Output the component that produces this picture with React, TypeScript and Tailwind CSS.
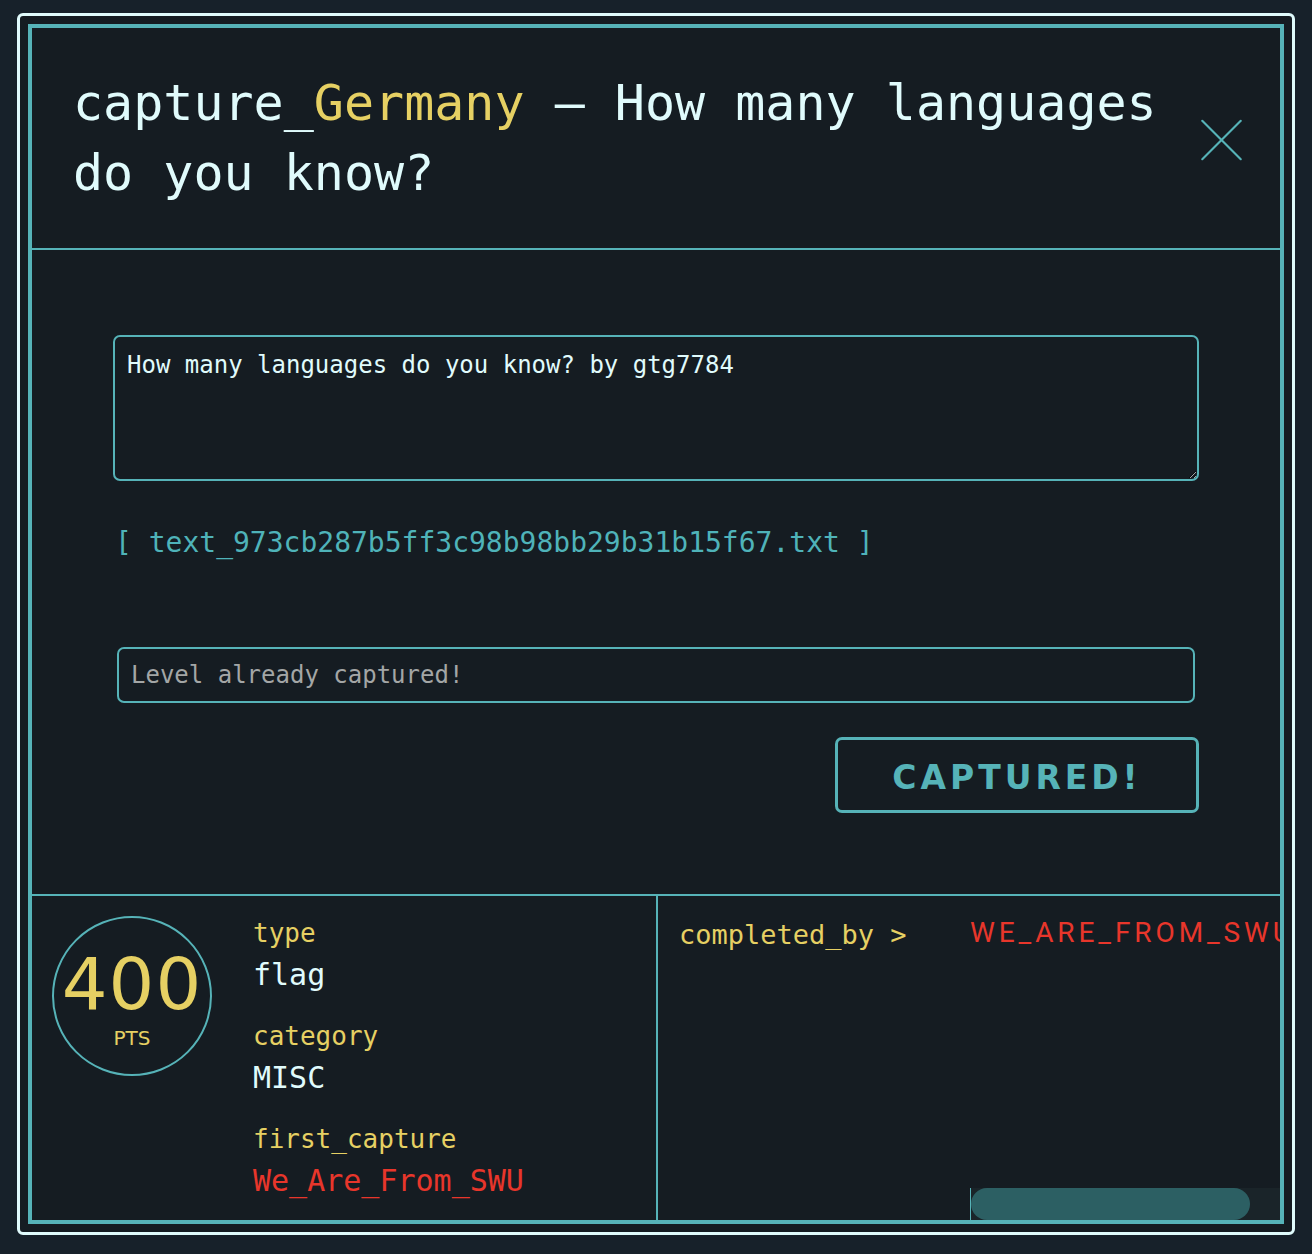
import { X } from 'lucide-react'

const mono = { fontFamily: '"DejaVu Sans Mono", "Liberation Mono", monospace' }
const sans = { fontFamily: '"DejaVu Sans", "Liberation Sans", sans-serif' }

interface IInfoRow {
  label: string
  value: string
  valueClassName?: string
}

const InfoRow = ({ label, value, valueClassName }: IInfoRow) => {
  return (
    <div className="mb-[19px]">
      <p className="text-[26px] leading-[36px] text-[#e6d063]" style={mono}>
        {label}
      </p>
      <p className={`text-[30px] leading-[48px] ${valueClassName || 'text-[#e0fbfc]'}`} style={mono}>
        {value}
      </p>
    </div>
  )
}

const completedBy = ['WE_ARE_FROM_SWU', 'gtg7784', 'NULL_PTR', 'KAIST_GoN']

export default function App() {
  return (
    <div className="min-h-screen w-full bg-[#17212a] pt-[13px] pl-[17px]">
      <div className="w-[1278px] h-[1222px] border-[3px] border-[#e0fbfc] rounded-[6px] p-[8px] bg-[#151c22]">
        <div className="w-full h-full border-4 border-[#56b3b8] flex flex-col bg-[#151c22]">
          {/* header */}
          <div className="h-[222px] border-b-2 border-[#56b3b8] flex items-center justify-between pl-[41px] pr-[20px]">
            <h1 className="max-w-[1110px] text-[50px] leading-[70px] text-[#e0fbfc]" style={mono}>
              capture_<span className="text-[#e6d063]">Germany</span> – How many languages do you know?
            </h1>
            <X className="w-[80px] h-[80px] text-[#56b3b8] mt-[4px]" strokeWidth={0.65} />
          </div>

          {/* body */}
          <div className="h-[646px] border-b-2 border-[#56b3b8] px-[81px] pt-[85px]">
            <textarea
              readOnly
              defaultValue="How many languages do you know? by gtg7784"
              className="block w-full h-[146px] bg-transparent border-2 border-[#56b3b8] rounded-[7px] px-[12px] py-[12px] text-[24px] leading-[32px] text-[#e0fbfc] outline-none"
              style={mono}
            />
            <p className="mt-[42px] ml-[2px] text-[28px] leading-[40px] text-[#4fb3b9]" style={mono}>
              [ text_973cb287b5ff3c98b98bb29b31b15f67.txt ]
            </p>
            <div className="mt-[84px] mx-[4px] h-[56px] border-2 border-[#56b3b8] rounded-[7px] flex items-center px-[12px]">
              <input
                readOnly
                placeholder="Level already captured!"
                className="w-full bg-transparent text-[24px] outline-none placeholder:text-[#a3a6a6]"
                style={mono}
              />
            </div>
            <div className="mt-[34px] flex justify-end">
              <button
                className="w-[364px] h-[76px] border-[3px] border-[#56b3b8] rounded-[7px] text-[33px] font-bold tracking-[0.12em] text-[#56b3b8] pt-[6px]"
                style={sans}
              >
                CAPTURED!
              </button>
            </div>
          </div>

          {/* footer */}
          <div className="flex-1 flex min-h-0">
            <div className="w-[626px] border-r-2 border-[#56b3b8] flex pl-[20px] pt-[20px]">
              <div className="w-[160px] h-[160px] rounded-full border-2 border-[#56b3b8] flex flex-col items-center justify-center shrink-0">
                <p className="text-[72px] leading-[72px] tracking-[1px] text-[#e6d063] mt-[6px]" style={sans}>
                  400
                </p>
                <p className="text-[20px] leading-[24px] text-[#e6d063] mt-[6px]" style={sans}>
                  PTS
                </p>
              </div>
              <div className="ml-[41px] -mt-[1px]">
                <InfoRow label="type" value="flag" />
                <InfoRow label="category" value="MISC" />
                <InfoRow label="first_capture" value="We_Are_From_SWU" valueClassName="text-[#e8362b]" />
              </div>
            </div>
            <div className="flex-1 flex min-w-0">
              <p
                className="pl-[21px] pt-[21px] w-[312px] shrink-0 text-[27px] leading-[36px] text-[#e6d063] whitespace-nowrap"
                style={mono}
              >
                completed_by &gt;
              </p>
              <div className="flex-1 min-w-0 flex flex-col overflow-hidden">
                <div className="pt-[19px] flex gap-[40px] whitespace-nowrap">
                  {completedBy.map((name) => (
                    <span
                      key={name}
                      className="text-[28px] leading-[36px] tracking-[0.14em] text-[#e8362b]"
                      style={{ fontFamily: 'Roboto, "Liberation Sans", sans-serif' }}
                    >
                      {name}
                    </span>
                  ))}
                </div>
                <div className="mt-auto h-[32px] bg-[#1a2429] border-l border-[#56b3b8]">
                  <div className="h-full w-[279px] rounded-full bg-[#2c5f63]" />
                </div>
              </div>
            </div>
          </div>
        </div>
      </div>
    </div>
  )
}
